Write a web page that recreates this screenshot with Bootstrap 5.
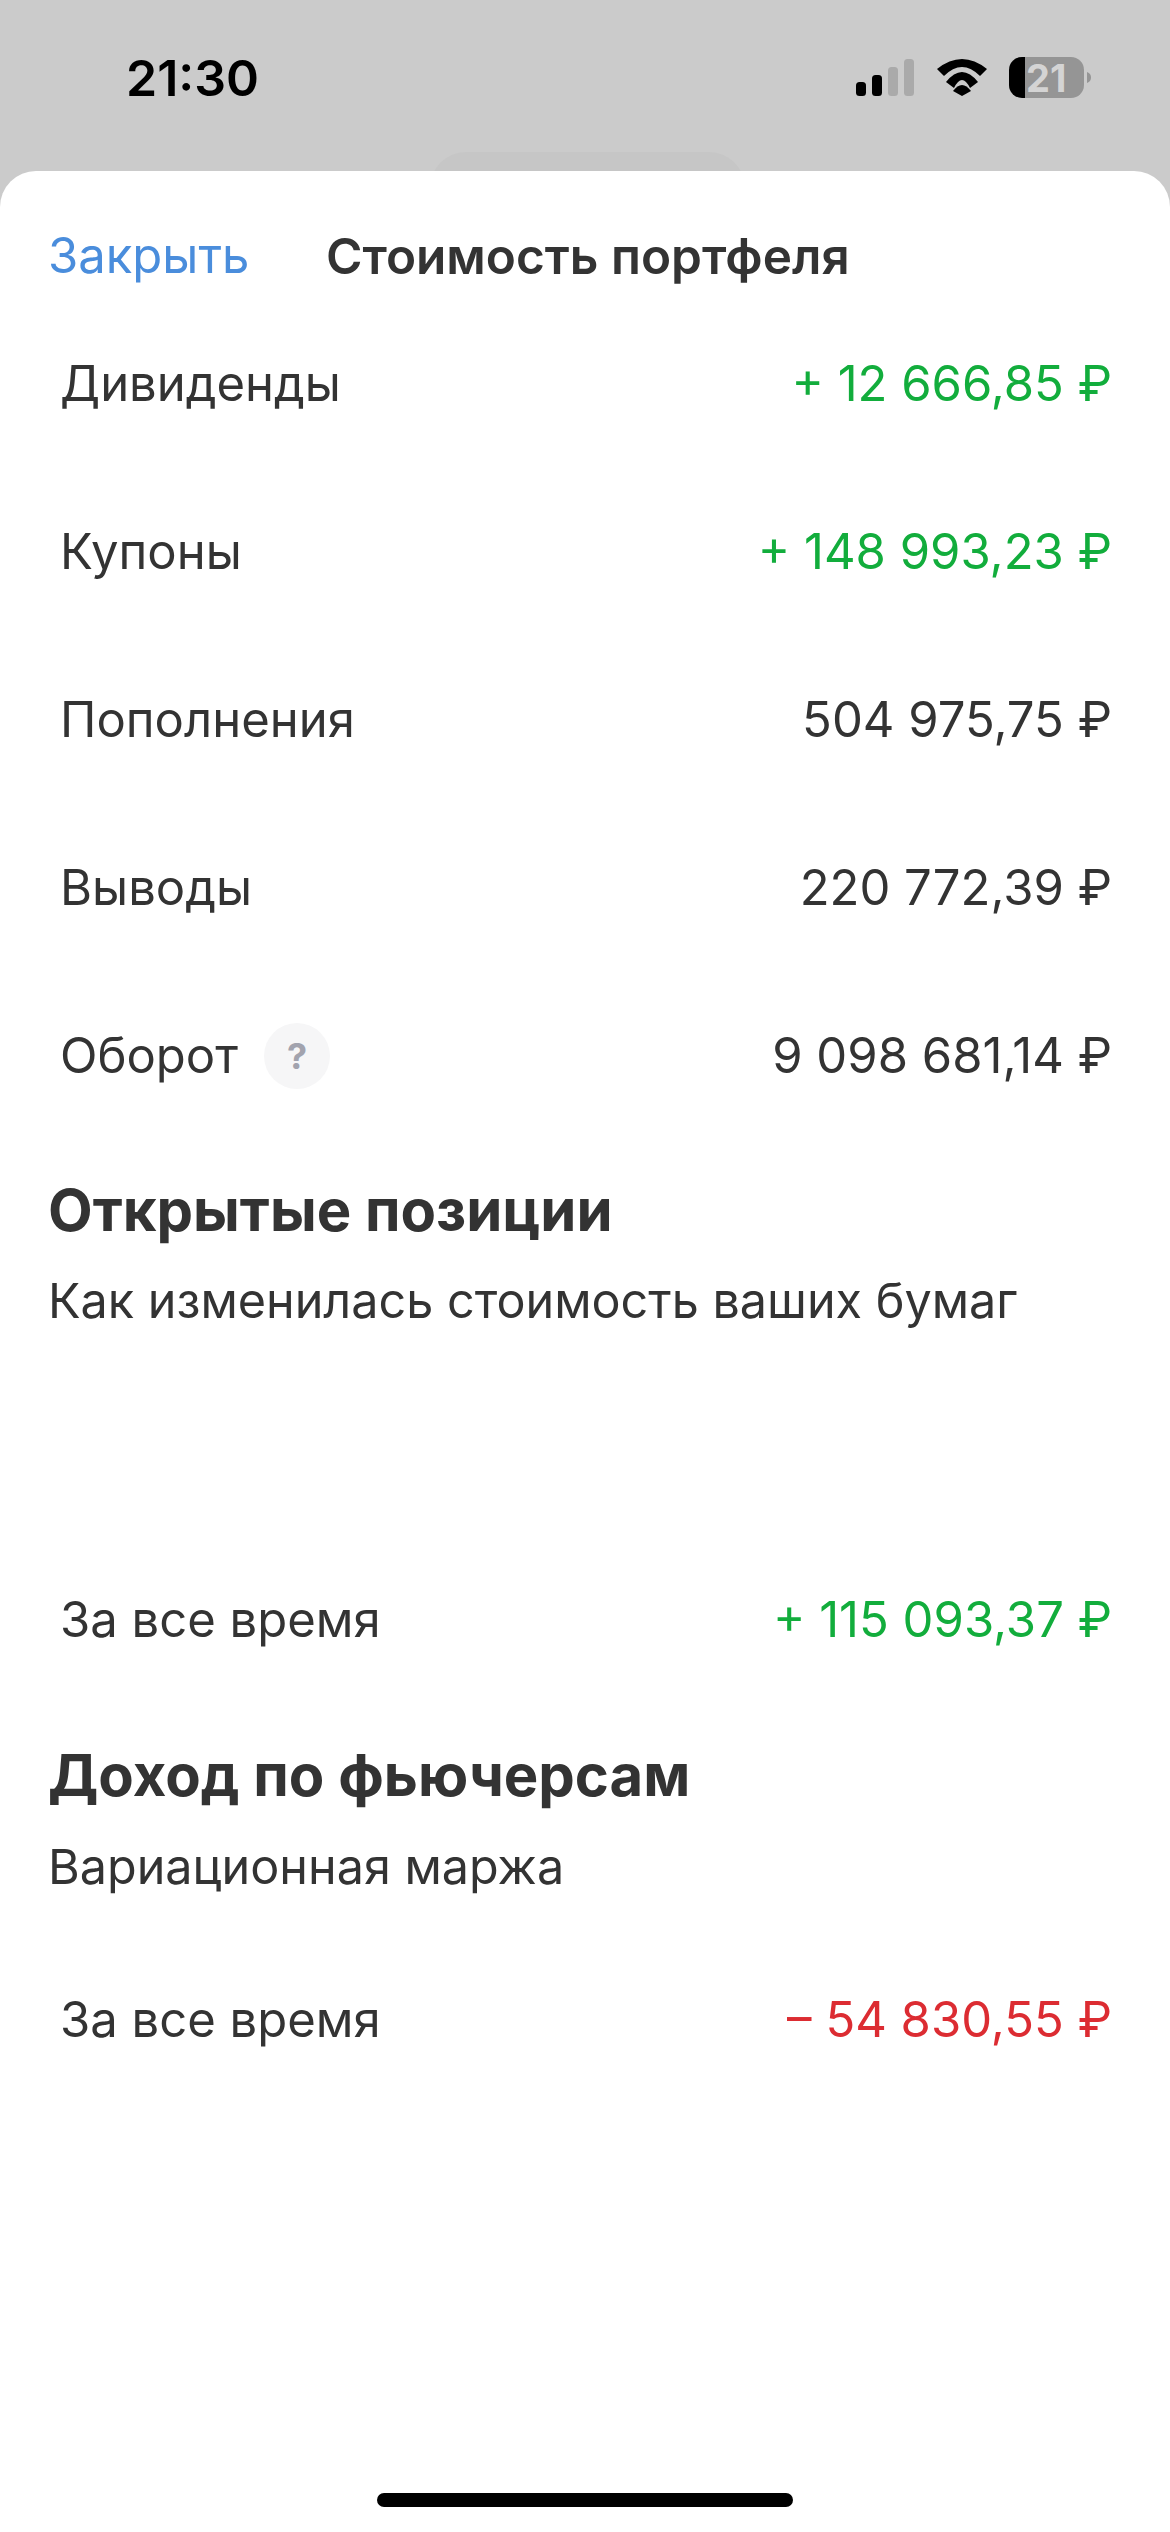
<!DOCTYPE html>
<html lang="ru">
<head>
    <meta charset="UTF-8">
    <meta name="viewport" content="width=device-width, initial-scale=1.0">
    <title>Стоимость портфеля</title>
    <link href="https://cdn.jsdelivr.net/npm/bootstrap@5.3.0/dist/css/bootstrap.min.css" rel="stylesheet">
    <style>
        html, body { height: 2532px; }
        body { background: #cbcbcb; font-family: Inter, "Liberation Sans", sans-serif; color: #333; overflow: hidden; }
        .phone { height: 2532px; }
        .status-bar { height: 171px; padding: 0 0 0 126px; position: relative; }
        .status-time { font-size: 50px; font-weight: 600; color: #000; line-height: 1; margin-top: 53px; }
        .status-icons { position: absolute; left: 850px; top: 50px; }
        .behind-pill { position: absolute; left: 430px; top: 152px; width: 315px; height: 40px; background: #c6c6c6; border-radius: 36px 36px 0 0; }
        .sheet { background: #fff; border-radius: 36px 36px 0 0; position: relative; }
        .sheet-head { padding: 56px 48px 0; height: 129px; font-size: 49px; line-height: 58px; }
        .close-link { color: #4a8ddc; text-decoration: none; width: 278px; }
        .sheet-title { font-weight: 600; font-size: 49.5px; }
        .data-row { height: 168px; padding: 0 58px 0 60px; font-size: 49px; }
        .val-green { color: #12ad3c; }
        .val-red { color: #dc2c32; }
        .hint-dot { width: 66px; height: 66px; border-radius: 50%; background: #f6f6f7; color: #a2a3ae; font-weight: 700; font-size: 36px; margin-left: 26px; }
        .section-head { margin: 40px 0 0 48px; font-size: 58px; line-height: 60px; font-weight: 700; }
        .section-sub { margin: 31px 0 0 48px; font-size: 48.5px; line-height: 60px; }
        .home-bar { width: 416px; height: 14px; background: #000; border-radius: 7px; margin: auto auto 25px; }
    </style>
</head>
<body>
    <div class="phone d-flex flex-column">
        <div class="status-bar flex-shrink-0">
            <div class="status-time">21:30</div>
            <svg class="status-icons" width="250" height="60" viewBox="0 0 250 60">
                <rect x="6" y="32" width="10" height="14" rx="3.5" fill="#000"/>
                <rect x="22" y="25" width="10" height="21" rx="3.5" fill="#000"/>
                <rect x="38" y="17" width="10" height="29" rx="3.5" fill="#aaa"/>
                <rect x="54" y="9" width="10" height="37" rx="3.500" fill="#aaa"/>
                <path d="M87 19Q112 -1 137 19L130 26Q112 8 94 26Z" fill="#000"/>
                <path d="M96 32Q112 12 128 32L120 38Q112 22 104 38Z" fill="#000"/>
                <path d="M103 41Q112 29 121 41L112 46Z" fill="#000"/>
                <path d="M175 7H221A13 13 0 0 1 234 20V35A13 13 0 0 1 221 48H175Z" fill="#959595"/>
                <path d="M175 7H172A13 13 0 0 0 159 20V35A13 13 0 0 0 172 48H175Z" fill="#000"/>
                <path d="M237 22C240 23 241 25 241 27.500C241 30 240 32 237 33Z" fill="#959595"/>
                <text x="176" y="42" font-family="Inter, sans-serif" font-weight="700" font-size="38" fill="#d4d4d4">21</text>
            </svg>
            <div class="behind-pill"></div>
        </div>
        <div class="sheet flex-grow-1 d-flex flex-column">
            <div class="sheet-head d-flex">
                <a href="#" class="close-link">Закрыть</a>
                <div class="sheet-title">Стоимость портфеля</div>
            </div>
            <div class="data-row d-flex justify-content-between align-items-center"><span>Дивиденды</span><span class="val-green">+ 12 666,85 ₽</span></div>
            <div class="data-row d-flex justify-content-between align-items-center"><span>Купоны</span><span class="val-green">+ 148 993,23 ₽</span></div>
            <div class="data-row d-flex justify-content-between align-items-center"><span>Пополнения</span><span>504 975,75 ₽</span></div>
            <div class="data-row d-flex justify-content-between align-items-center"><span>Выводы</span><span>220 772,39 ₽</span></div>
            <div class="data-row d-flex justify-content-between align-items-center">
                <span class="d-flex align-items-center">Оборот<span class="hint-dot d-flex align-items-center justify-content-center">?</span></span>
                <span>9 098 681,14 ₽</span>
            </div>
            <div class="section-head">Открытые позиции</div>
            <div class="section-sub">Как изменилась стоимость ваших бумаг</div>
            <div class="data-row d-flex justify-content-between align-items-center" style="margin-top: 205px;"><span>За все время</span><span class="val-green">+ 115 093,37 ₽</span></div>
            <div class="section-head" style="margin-top: 41px;">Доход по фьючерсам</div>
            <div class="section-sub" style="margin-top: 32px;">Вариационная маржа</div>
            <div class="data-row d-flex justify-content-between align-items-center" style="margin-top: 39px;"><span>За все время</span><span class="val-red">– 54 830,55 ₽</span></div>
            <div class="home-bar"></div>
        </div>
    </div>
    <script src="https://cdn.jsdelivr.net/npm/bootstrap@5.3.0/dist/js/bootstrap.bundle.min.js"></script>
</body>
</html>
